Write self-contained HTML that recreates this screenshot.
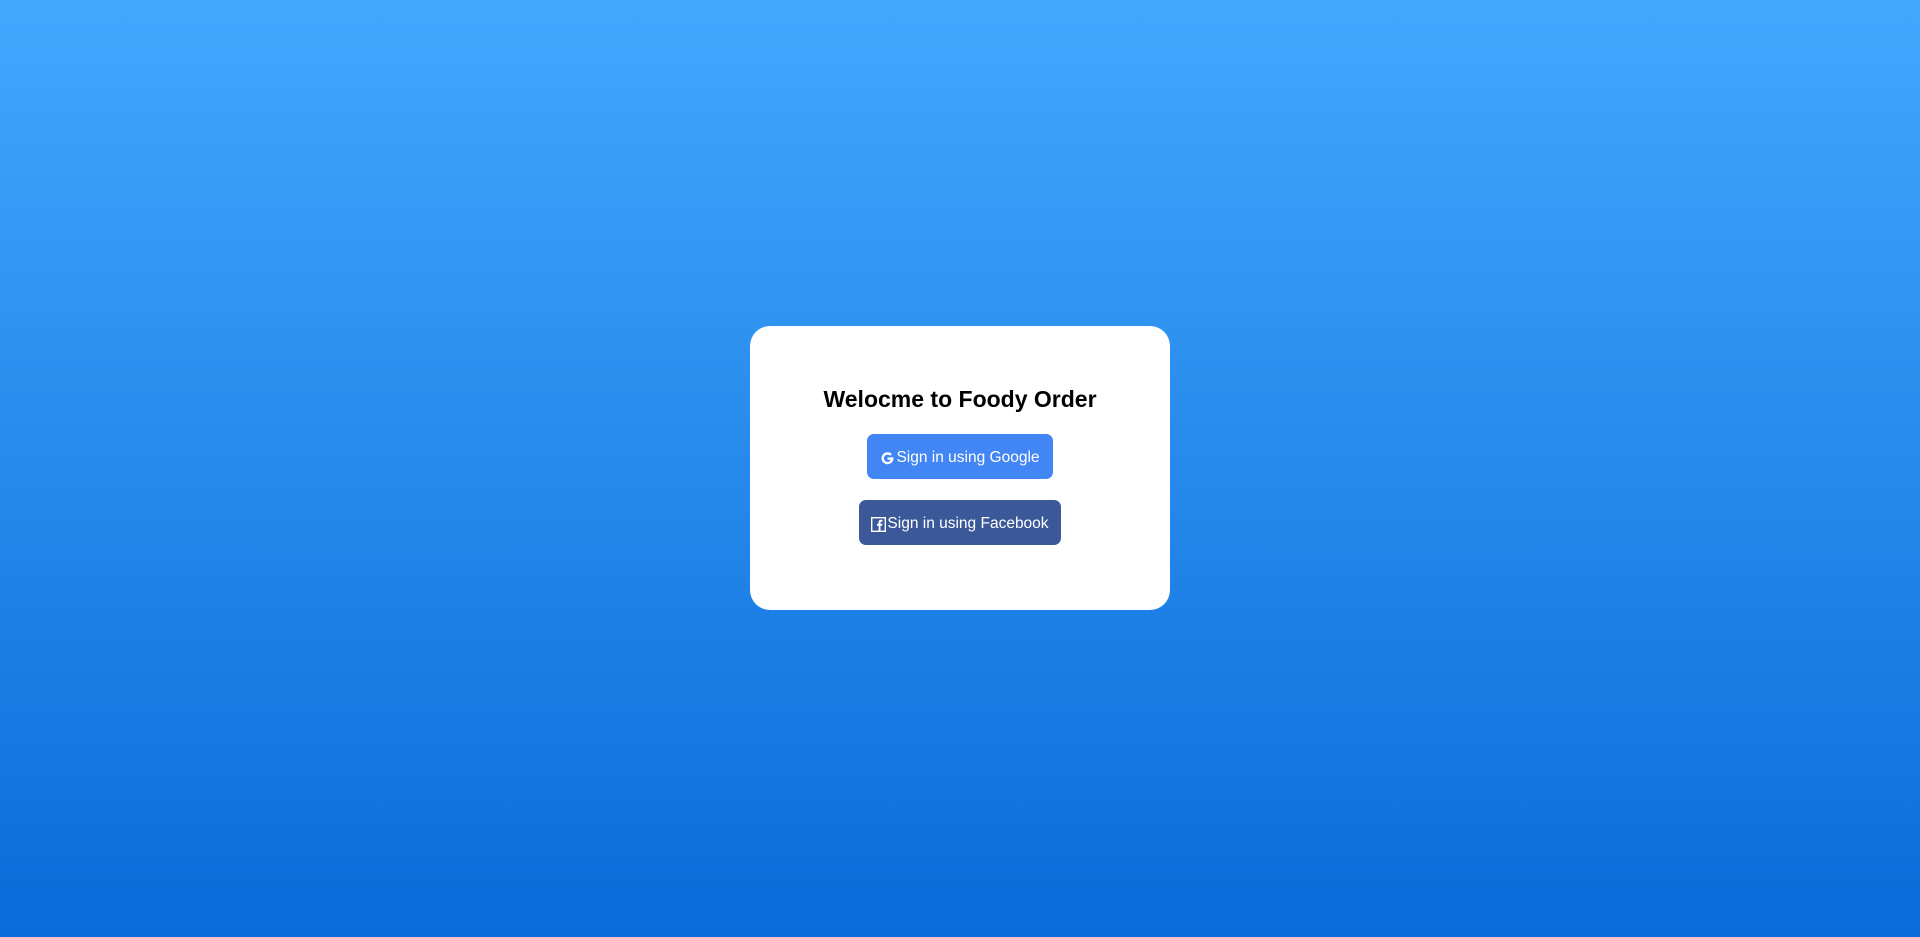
<!DOCTYPE html>
<html><head><style>
html,body{margin:0;height:937px;width:1920px;overflow:hidden}
body{background:linear-gradient(#42a8fe,#0a6bd9);font-family:"Liberation Sans",sans-serif;position:relative}
.card{position:absolute;left:750px;top:326px;width:420px;height:284px;background:#fff;border-radius:20px}
h1{position:absolute;left:0;right:0;top:384px;margin:0;text-align:center;font-size:23px;font-weight:bold;color:#000;line-height:30px}
.btn{position:absolute;border-radius:7px;color:#fff;font-size:15.5px;display:flex;align-items:center;justify-content:center;gap:1px;white-space:nowrap;padding-top:3px;box-sizing:border-box}
.g{left:867px;top:434px;width:186px;height:45px;background:#4285f4}
.f{left:859px;top:500px;width:202px;height:45px;background:#3b5998}
</style></head><body>
<div class="card"></div>
<h1>Welocme to Foody Order</h1>
<div class="btn g"><svg width="15" height="15" viewBox="0 0 14 14"><path d="M12.5 6H7v2.3h3.1A3.4 3.4 0 1 1 9.4 4.4l1.6-1.6A5.6 5.6 0 1 0 12.6 7c0-.4 0-.7-.1-1z" fill="#fff"/></svg>Sign in using Google</div>
<div class="btn f"><svg width="15" height="15" viewBox="0 0 15 15"><rect x="0.7" y="0.7" width="13.6" height="13.6" fill="none" stroke="#fff" stroke-width="1.4"/><path d="M9.5 14.3V8.8h1.7l.3-2H9.5V5.6c0-.6.2-1 1-1h1V2.9c-.2 0-.8-.1-1.5-.1-1.5 0-2.4.9-2.4 2.5v1.5H6v2h1.6v5.5z" fill="#fff"/></svg>Sign in using Facebook</div>
</body></html>
